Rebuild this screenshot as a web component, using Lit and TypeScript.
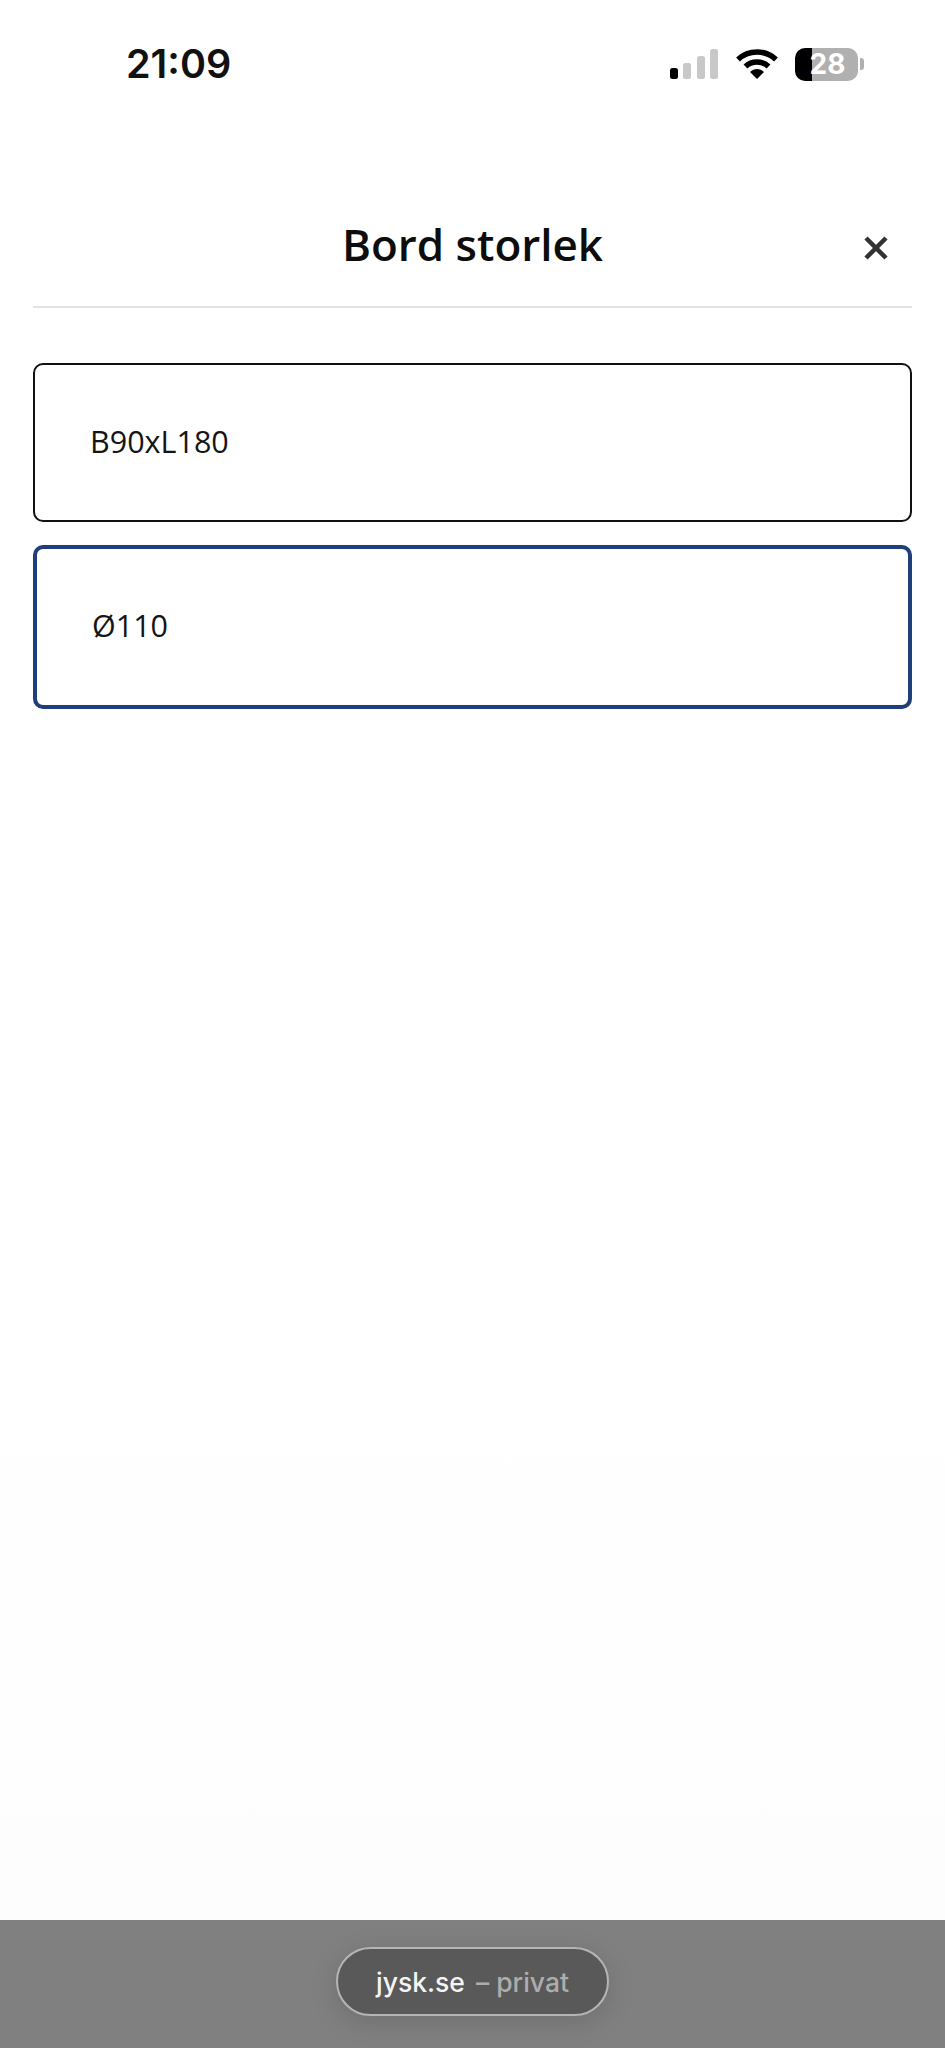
import { html, css, LitElement } from 'lit';
import { customElement } from 'lit/decorators.js';

const SIZES = ['B90xL180', 'Ø110'];
const SELECTED = 'Ø110';

@customElement('app-root')
export class AppRoot extends LitElement {
  static styles = css`
    :host {
      display: flex;
      flex-direction: column;
      width: 945px;
      height: 2048px;
      background: linear-gradient(#ffffff 60%, #fdfdfd);
      font-family: 'Open Sans', sans-serif;
      color: #111;
      overflow: hidden;
    }

    .status {
      display: flex;
      align-items: center;
      justify-content: space-between;
      height: 64px;
      margin-top: 32px;
      padding: 0 81px 0 126px;
    }

    .time {
      font-family: Inter, sans-serif;
      font-size: 39.5px;
      font-weight: 600;
      color: #111;
    }

    .indicators {
      display: flex;
      align-items: center;
      gap: 16px;
    }

    .indicators svg {
      display: block;
    }

    .battery-wrap {
      display: flex;
      align-items: center;
      gap: 2px;
    }

    .battery {
      display: flex;
      align-items: center;
      justify-content: center;
      width: 63px;
      height: 33px;
      padding-left: 2px;
      box-sizing: border-box;
      border-radius: 10px;
      background: linear-gradient(90deg, #000 27%, #b0b0b0 27%);
      font-family: Inter, sans-serif;
      font-size: 28px;
      font-weight: 700;
      color: #fff;
    }

    .nub {
      width: 4px;
      height: 12px;
      border-radius: 0 3px 3px 0;
      background: #b0b0b0;
    }

    .header {
      display: grid;
      grid-template-columns: 60px 1fr 60px;
      align-items: center;
      height: 116px;
      margin: 96px 33px 0;
      padding-bottom: 10px;
      border-bottom: 2px solid #e3e3e3;
      box-sizing: border-box;
    }

    .title {
      grid-column: 2;
      margin: 0;
      text-align: center;
      font-size: 44px;
      font-weight: 600;
      color: #0d0d0d;
    }

    .close {
      display: flex;
      justify-content: flex-end;
      padding: 7px 23px 0 0;
    }

    .options {
      flex: 1;
      display: flex;
      flex-direction: column;
      gap: 23px;
      padding: 55px 33px 0;
    }

    .option {
      display: flex;
      align-items: center;
      height: 159px;
      padding: 0 0 4px 55px;
      box-sizing: border-box;
      border: 2px solid #111;
      border-radius: 10px;
      font-size: 30.5px;
      color: #151515;
    }

    .option.selected {
      height: 164px;
      border: 4px solid #1f3f7a;
    }

    .bar {
      display: flex;
      align-items: center;
      justify-content: center;
      height: 128px;
      padding-bottom: 5px;
      box-sizing: border-box;
      background: #808080;
    }

    .pill {
      display: flex;
      align-items: center;
      justify-content: center;
      gap: 11px;
      width: 273px;
      height: 69px;
      box-sizing: border-box;
      border: 2px solid #b5b5b5;
      border-radius: 35px;
      background: #595959;
      box-shadow: 0 6px 28px rgba(0, 0, 0, 0.14);
      font-family: Inter, sans-serif;
      font-size: 26.5px;
      font-weight: 500;
      color: #f4f4f4;
    }

    .pill .muted {
      color: #adadad;
    }
  `;

  render() {
    return html`
      <div class="status">
        <span class="time">21:09</span>
        <div class="indicators">
          <svg width="50" height="32" viewBox="0 0 50 32">
            <rect x="1" y="20" width="8" height="11" rx="2.5" fill="#000" />
            <rect x="14" y="15" width="8" height="16" rx="2.5" fill="#c8c8c8" />
            <rect x="28" y="8" width="8" height="23" rx="2.5" fill="#c8c8c8" />
            <rect x="41" y="1" width="8" height="30" rx="2.5" fill="#c8c8c8" />
          </svg>
          <svg width="44" height="32" viewBox="0 0 44 32">
            <path d="M3 11.5C13.5 1.5 30.5 1.5 41 11.5" fill="none" stroke="#000" stroke-width="5.5" />
            <path d="M10.5 18.5C16.5 12.5 27.5 12.5 33.5 18.5" fill="none" stroke="#000" stroke-width="5.5" />
            <path d="M15 24L22 31L29 24C25 20 19 20 15 24Z" fill="#000" />
          </svg>
          <div class="battery-wrap">
            <div class="battery">28</div>
            <div class="nub"></div>
          </div>
        </div>
      </div>

      <div class="header">
        <h1 class="title">Bord storlek</h1>
        <div class="close">
          <svg width="26" height="26" viewBox="0 0 26 26">
            <path d="M3 3L23 23M23 3L3 23" fill="none" stroke="#333" stroke-width="4.5" />
          </svg>
        </div>
      </div>

      <div class="options">
        ${SIZES.map(
          (size) => html`<div class="option ${size === SELECTED ? 'selected' : ''}">${size}</div>`
        )}
      </div>

      <div class="bar">
        <div class="pill">
          <span>jysk.se</span>
          <span class="muted">– privat</span>
        </div>
      </div>
    `;
  }
}
